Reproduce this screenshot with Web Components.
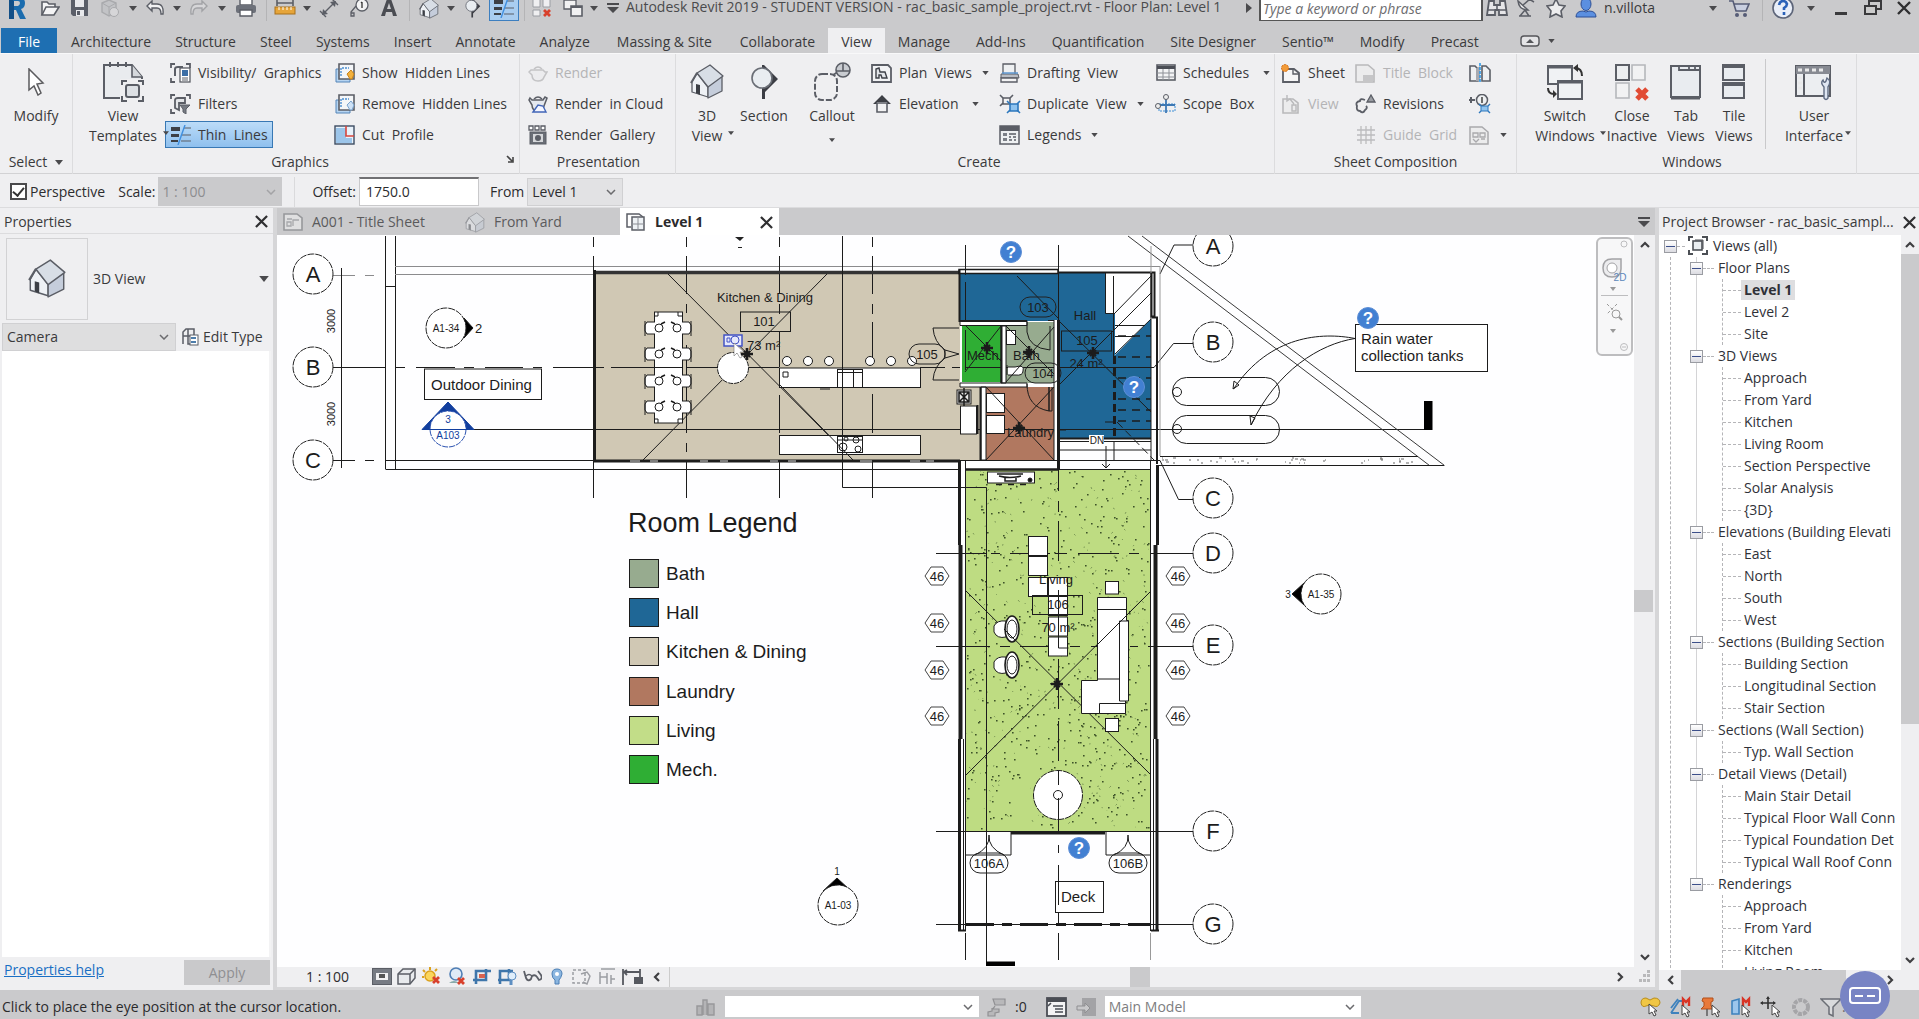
<!DOCTYPE html>
<html lang="en">
<head>
<meta charset="utf-8">
<title>Autodesk Revit 2019 - Floor Plan: Level 1</title>
<style>
html,body{margin:0;height:100%;overflow:hidden}
body{font:14px/20px "Open Sans","Noto Sans",sans-serif;color:#3a3a3c;background:#efeff1}
</style>
</head>
<body>
<rv-app></rv-app>
<script>
const RESET = `*{box-sizing:border-box}button,input,select{font:inherit;color:inherit;margin:0;padding:0;border:0;border-radius:0;background:none;outline:0}button{white-space:pre}`;
function define(name, css, html, setup){
  const t = document.createElement('template');
  customElements.define(name, class extends HTMLElement{
    constructor(){ super(); this.attachShadow({mode:'open'}); }
    connectedCallback(){
      if(this.ready) return; this.ready = true;
      t.innerHTML = `<style>${RESET}${css}</style>` + (typeof html === 'function' ? html(this) : html);
      this.shadowRoot.append(t.content.cloneNode(true));
      if(setup) setup(this);
    }
  });
}

/* ---------- icons: [viewBox width, viewBox height, markup] ---------- */
const G='#5b5e66', L='#9a9da3';
const house=(o)=>`<g opacity="${o}" stroke="${G}" stroke-width="1.3" stroke-linejoin="round"><path d="M2 18 7 9l11 14v10L2 28z" fill="#eef1f5"/><path d="M18 22 32 12v15l-14 7z" fill="#c5cddb"/><path d="M7 9 20 1l13 11-15 11z" fill="#d8dee6"/><path d="M1 19 7 9" stroke-width="2"/><path d="M6 20l4 1v10l-4-2z" fill="#3c3f46" stroke="none"/></g>`;
const thin=`<path d="M1 2h9v4H1zM1 9h8v3H1zM1 15h7v2H1z" fill="#3d4046"/><path d="M14 3h7M12 10h9M11 16h10" stroke="${G}" stroke-width="1.2"/><path d="M15 0 8 20" stroke="#3f8fe0" stroke-width="1.4"/>`;
const redx=(x,y)=>`<path d="M${x} ${y}l6 6m0-6l-6 6" stroke="#d8402c" stroke-width="2.8"/>`;
const cur=(x,y)=>`<path d="M${x} ${y}v10l3-2 2 4 2-1-2-4h3z" fill="#fff" stroke="#444" stroke-width="1"/>`;
const brackets=`<path d="M1 5V1h4M16 1h4v4M1 15v4h4" fill="none" stroke="${G}" stroke-width="1.8"/>`;
const ICONS={
 R:[20,26,`<path d="M2 2h10q6 1 6 6 0 5-4 6l5 10h-6L9 15H7v9H2zM7 6v5h4q2-1 2-3 0-2-2-2z" fill="#1b6cae"/><path d="M2 2l5 4v18H2z" fill="#124f87"/>`],
 open:[20,20,`<path d="M2 17V4h5l2 2h6v3" fill="#f4f4f5" stroke="${G}" stroke-width="1.6"/><path d="M2 17 6 9h13l-5 8z" fill="#f4f4f5" stroke="${G}" stroke-width="1.6"/>`],
 save:[20,20,`<path d="M1 2h17v16H3l-2-2z" fill="#5a5e68"/><path d="M5 2h9v7H5z" fill="#e8e9ec"/><path d="M6 12h8v6H6z" fill="#e8e9ec"/><path d="M7 13h3v4H7z" fill="#5a5e68"/>`],
 sync:[20,20,`<path d="M2 5 9 2l7 3v9l-7 4-7-4z" fill="#c2c3c6" stroke="#a9aaad" stroke-width="1.4"/><path d="M2 5l7 4 7-4M9 9v9" stroke="#a9aaad" fill="none"/><circle cx="14" cy="14" r="4.500" fill="#d6d6d8" stroke="#a9aaad"/>`],
 undo:[20,20,`<path d="M7 3 2 8l5 5v-3h5q4 0 4 6h2q1-10-6-10H7z" fill="#f2f2f3" stroke="${G}" stroke-width="1.4"/>`],
 redo:[20,20,`<path d="M13 3l5 5-5 5v-3H8q-4 0-4 6H2Q1 6 8 6h5z" fill="#d6d6d8" stroke="#a2a3a6" stroke-width="1.4"/>`],
 print:[22,20,`<path d="M5 1h12v6H5z" fill="#fff" stroke="${G}" stroke-width="1.4"/><rect x="1" y="7" width="20" height="8" rx="2" fill="#6d717a"/><path d="M5 12h12v6H5z" fill="#fff" stroke="${G}" stroke-width="1.4"/>`],
 measure:[22,20,`<rect x="1" y="9" width="20" height="7" fill="#e6a53a" stroke="#a8701c"/><path d="M3 5h16M3 2v6M19 2v6" stroke="${G}" stroke-width="1.6"/><path d="M5 9v3M9 9v3M13 9v3M17 9v3" stroke="#fff"/>`],
 dim:[20,20,`<path d="M4 16 16 4M1 13l6 6M13 1l6 6" stroke="${G}" stroke-width="1.4"/><path d="M3 17l1-6 5 5zM17 3l-1 6-5-5z" fill="${G}"/>`],
 tag:[20,20,`<circle cx="13" cy="7" r="6" fill="#f3f3f4" stroke="${G}" stroke-width="1.3"/><path d="M13 4v6M12 5l1-1" stroke="#333" stroke-width="1.3"/><path d="M7 8 2 14v4h3v-3H2" fill="none" stroke="${G}" stroke-width="1.3"/>`],
 A:[18,20,`<path d="M1 18 7 1h4l6 17h-4l-1-4H6l-1 4zM7 11h4L9 5z" fill="#4a4c52" fill-rule="evenodd"/>`],
 house:[34,35,house(1)],
 houseDim:[34,35,house(.45)],
 sect:[30,36,`<path d="M15 1 29 15 16 28v7h-3V1z" fill="#3b3d44"/><circle cx="13" cy="14" r="10" fill="#e9edf1" stroke="#6a6e76" stroke-width="1.6"/>`],
 thin:[22,20,thin],
 closehid:[20,20,`<path d="M1 1h7v8H1zM11 1h7v8h-7zM1 12h7v6H1z" fill="#efeff1" stroke="${L}"/>${redx(12,12)}`],
 switchw:[20,20,`<path d="M1 2h12v9H1z" fill="#f1f1f2" stroke="${G}" stroke-width="1.3"/><path d="M8 8h11v10H8z" fill="#f1f1f2" stroke="${G}" stroke-width="1.6"/><path d="M8 9h11" stroke="${G}" stroke-width="2"/>`],
 tri:[8,5,`<path d="M0 0h8L4 5z" fill="#4a4a4d"/>`],
 triR:[6,10,`<path d="M0 0l6 5-6 5z" fill="#4a4a4d"/>`],
 tribar:[12,10,`<path d="M0 0h12v2H0zM0 4h12L6 10z" fill="#4a4a4d"/>`],
 binoc:[22,20,`<path d="M3 3h5v4h6V3h5l2 14h-8v-5H9v5H1z" fill="#e6e6e8" stroke="${G}" stroke-width="1.8"/><path d="M2 12h6M14 12h6M11 7v5" stroke="${G}" stroke-width="1.6"/>`],
 sat:[20,20,`<path d="M2 3q1 9 10 9z" fill="#eee" stroke="${G}" stroke-width="1.5"/><path d="M7 7l7-6M3 18h12M9 12l4 6M9 12l-5 6M13 1l5 3" stroke="${G}" stroke-width="1.5"/>`],
 star:[20,20,`<path d="M10 1l3 6 6 1-4 5 1 6-6-3-6 3 1-6-4-5 6-1z" fill="#ededee" stroke="${G}" stroke-width="1.6"/>`],
 user:[22,22,`<ellipse cx="11" cy="7" rx="5" ry="6.500" fill="#5b8fe0" stroke="#2d4f96"/><path d="M1 20q0-6 7-6l3 1 3-1q7 0 7 6z" fill="#5b8fe0" stroke="#2d4f96"/>`],
 cart:[22,20,`<path d="M1 3h4l3 10h10l3-7H6" fill="#c9cfe0" stroke="#565c76" stroke-width="1.6"/><circle cx="9" cy="17" r="2" fill="#565c76"/><circle cx="17" cy="17" r="2" fill="#565c76"/>`],
 helpb:[24,24,`<circle cx="12" cy="12" r="10" fill="#e9eef8" stroke="#5c6478" stroke-width="1.6"/><path d="M8 9q1-4 4-4t4 3q0 2-3 4v2M13 16v3" fill="none" stroke="#2a61b8" stroke-width="2.6"/>`],
 min:[12,16,`<path d="M0 12h12v3H0z" fill="#3a3a3c"/>`],
 restore:[18,16,`<path d="M5 1h12v8H5z" fill="none" stroke="#3a3a3c" stroke-width="2"/><path d="M1 6h11v8H1z" fill="#ccc" stroke="#3a3a3c" stroke-width="2"/>`],
 x:[14,14,`<path d="M1 1l12 12M13 1L1 13" stroke="#2f2f31" stroke-width="2.4"/>`],
 pill:[20,12,`<rect x="1" y="1" width="18" height="10" rx="3" fill="#e4e4e6" stroke="#55565a" stroke-width="1.4"/><path d="M6 8l4-4 4 4z" fill="#55565a"/>`],
 arrow:[20,28,`<path d="M3 1v21l5-4 4 9 3-2-4-9 6-1z" fill="#fff" stroke="#5b5b5e" stroke-width="1.5"/>`],
 vtempl:[42,40,`<path d="M2 3h28l10 12v21H2z" fill="#e9ebee" stroke="${G}" stroke-width="2"/><path d="M30 3v12h10" fill="#d5d8dc" stroke="${G}" stroke-width="1.6"/><path d="M8 0v5M16 0v5M24 0v5" stroke="${G}" stroke-width="2"/><rect x="18" y="17" width="24" height="23" fill="#efeff1"/><path d="M20 23v-4h5M36 19h5v4M20 34v5h5M36 39h5v-5" stroke="${G}" fill="none" stroke-width="2"/><rect x="24" y="23" width="13" height="12" rx="2" fill="#dde0e4" stroke="${G}" stroke-width="2"/>`],
 vis:[21,20,`${brackets}<path d="M5 13V6q0-2 3-2h5" fill="none" stroke="${G}" stroke-width="2"/><rect x="10" y="5" width="10" height="14" fill="#fff" stroke="${G}" stroke-width="1.3"/><path d="M12 7h6v6h-6z" fill="#3c6ea5"/><path d="M12 15h6M12 17h6" stroke="${G}"/>`],
 filt:[21,20,`${brackets}<path d="M5 14V6q0-2 3-2h7v5H9v7z" fill="#e4e6e9" stroke="${G}" stroke-width="1.8"/><path d="M10 11h10l-4 4v5l-3-2v-3z" fill="#777b83" stroke="${G}"/>`],
 show:[21,20,`<path d="M2 6h14v13H2z" fill="#b6d4f1" stroke="#5585b8"/><path d="M5 1h15v15H5z" fill="#f4f6f8" stroke="${G}" stroke-width="1.6"/><path d="M7 13V5h8" fill="none" stroke="#4b8ed0" stroke-dasharray="2 1" stroke-width="1.4"/><path d="M17 7l3 4-2 5h-2l-3-5z" fill="#f3b13d" stroke="#c98318"/>`],
 remo:[21,20,`<path d="M2 6h14v13H2z" fill="#b6d4f1" stroke="#5585b8"/><path d="M5 1h15v15H5z" fill="#f4f6f8" stroke="${G}" stroke-width="1.6"/><path d="M7 13V5h8" fill="none" stroke="#4b8ed0" stroke-dasharray="2 1" stroke-width="1.4"/><path d="M17 7l3 4-2 5h-2l-3-5z" fill="#cfe2f6" stroke="#7aa4cf"/>`],
 cutp:[21,20,`<rect x="1" y="1" width="19" height="18" fill="#e8f1fa" stroke="#3c4c62" stroke-width="1.4"/><path d="M2 3l10 0v10h6v5H2z" fill="#9cc5ea"/><path d="M12 1v10h8" fill="none" stroke="#d8453c" stroke-width="1.6"/>`],
 tea:[20,18,`<path d="M4 6h11l2 2h2l-3 5q-1 4-6 4-6 0-6-6L1 8l2-2z" fill="#ececee" stroke="#c3c3c5" stroke-width="1.5"/><path d="M6 5q4-4 8 0" fill="none" stroke="#c3c3c5" stroke-width="1.5"/>`],
 teac:[20,18,`<path d="M4 5h11l2-3 2 1-3 8q-1 5-6 5-6 0-6-6L1 5l1-2z" fill="#e4e8ee" stroke="${G}" stroke-width="1.5"/><path d="M6 4q4-4 8 0" fill="none" stroke="${G}" stroke-width="1.5"/><path d="M5 17l5-7 5 1 3 6z" fill="#f4f6ff" stroke="#4266b8" stroke-width="1.4"/>`],
 gall:[20,20,`<path d="M1 1h4v4H1zM7 1h4v4H7zM13 1h4v4h-4z" fill="#fff" stroke="${G}" stroke-width="1.3"/><rect x="2" y="7" width="16" height="12" fill="#6a6e76" stroke="${G}"/><rect x="5" y="9" width="10" height="8" fill="#d5d7da"/><circle cx="10" cy="13" r="3" fill="${G}"/>`],
 callout:[38,40,`<rect x="2" y="12" width="22" height="26" rx="7" fill="none" stroke="${G}" stroke-width="2" stroke-dasharray="6 2"/><path d="M20 13 28 8" stroke="${G}" stroke-width="2"/><circle cx="30" cy="8" r="7" fill="#c9ccd1" stroke="${G}" stroke-width="1.6"/><path d="M23 9h14M30 1v8" stroke="${G}" stroke-width="1.6"/>`],
 plan:[21,20,`<path d="M1 2h16l3 3v14H1z" fill="#f2f3f5" stroke="${G}" stroke-width="1.8"/><path d="M5 15V6l3-1 1 4h5l2 6h-5l-1-3H8v3z" fill="#e3e6ea" stroke="#3e4148" stroke-width="1.4"/>`],
 elev:[20,20,`<path d="M10 1 19 10h-4V8H5v2H1z" fill="#3d3f45"/><path d="M5 9h10v9H5z" fill="#f2f2f3" stroke="${G}" stroke-width="1.6"/>`],
 draft:[21,20,`<path d="M4 1h12v12H4z" fill="#eef0f2" stroke="${G}" stroke-width="1.3"/><path d="M2 11h17l1 4H2z" fill="#b9bdc4" stroke="${G}"/><path d="M2 15h16v4H2z" fill="#f3f3f4" stroke="${G}" stroke-width="1.4"/><path d="M3 10h16" stroke="#5e97d0" stroke-width="1.5"/>`],
 dup:[22,20,`<path d="M4 4h7v6H4z" fill="#f2f2f3" stroke="${G}" stroke-width="1.5"/><path d="M1 1l3 3M14 1l-3 3M1 12l3-3" stroke="${G}" stroke-width="1.6"/><path d="M11 10h8v7h-8z" fill="#8fc3ef" stroke="#2e78bd" stroke-width="1.6"/><path d="M8 7l3 3M21 7l-3 3M8 19l3-3M21 19l-3-3" stroke="#2e78bd" stroke-width="1.6"/>`],
 leg:[21,20,`<rect x="1" y="1" width="19" height="18" fill="#eef0f2" stroke="${G}" stroke-width="1.5"/><path d="M1 1h19v5H1z" fill="${G}"/><path d="M4 8h4v3H4zM4 13h4v3H4z" fill="#7b7f87"/><path d="M10 9h7M10 12h2M14 12h3M10 15h3M15 15h2" stroke="${G}" stroke-width="1.4"/>`],
 sched:[20,18,`<rect x="1" y="1" width="18" height="15" fill="#f2f3f5" stroke="${G}" stroke-width="1.6"/><path d="M1 2h18v3H1z" fill="#4a4d55"/><path d="M1 9h18M1 13h18M7 5v11M13 5v11" stroke="#8d9097"/>`],
 scope:[22,20,`<path d="M4 10h16v7H4z" fill="none" stroke="#3d8ed6" stroke-dasharray="2 1"/><path d="M11 3v16M2 11h18" stroke="#3d78b4" stroke-width="1.8"/><circle cx="11" cy="3" r="2.500" fill="#eee" stroke="${G}"/><circle cx="3" cy="12" r="2.500" fill="#eee" stroke="${G}"/>`],
 sheet:[21,20,`<path d="M3 6h11l5 4v9H3z" fill="#f5f5f6" stroke="${G}" stroke-width="1.8"/><path d="M13 6v5h6" fill="none" stroke="${G}" stroke-width="1.4"/><circle cx="5" cy="5" r="3.500" fill="#f29b38" stroke="#cf6c18" stroke-dasharray="2 1"/>`],
 sview:[21,20,`<path d="M3 5h10l5 4v10H3z" fill="#ececed" stroke="#b9b9bb" stroke-width="1.6"/><path d="M7 1v6l3-2 4 5M12 11h4v6h-4z" fill="none" stroke="#b9b9bb" stroke-width="1.4"/>`],
 tblock:[21,20,`<path d="M1 2h12l6 5v12H1z" fill="#ececed" stroke="#b9b9bb" stroke-width="1.6"/><path d="M8 12h10v6H8z" fill="#c6c6c8"/>`],
 rev:[21,20,`<path d="M10 6q-5-2-5 1-5 1-3 5-1 5 3 5 3 3 5-1 3-2 1-4" fill="none" stroke="${G}" stroke-width="1.8"/><path d="M16 1l4 7h-8z" fill="#9a9da3" stroke="${G}" stroke-width="1.3"/>`],
 grid:[20,20,`<path d="M5 1v18M10 1v18M15 1v18M1 5h18M1 10h18M1 15h18" stroke="#bcbcbe" stroke-width="1.3"/>`],
 match:[22,20,`<path d="M1 18V3h5l3 3v12zM13 18V3h4l4 4v11z" fill="#eef0f2" stroke="${G}" stroke-width="1.6"/><path d="M7 18V6l4-3v15z" fill="#a8aab0"/><path d="M11 0v20" stroke="#2f9ae8" stroke-width="1.6" stroke-dasharray="3 1"/>`],
 vref:[22,20,`<path d="M0 6h6M2 3v6" stroke="${G}" stroke-width="2"/><circle cx="13" cy="6" r="5.500" fill="#eef0f2" stroke="${G}" stroke-width="1.5"/><path d="M13 3v6" stroke="#333" stroke-width="1.4"/><path d="M12 12h7v5h-7z" fill="#8fc3ef" stroke="#2e78bd"/><path d="M10 10l2 2M21 10l-2 2M10 19l2-2M21 19l-2-2" stroke="#2e78bd" stroke-width="1.4"/>`],
 vport:[21,20,`<path d="M1 2h12l6 5v12H1z" fill="#ececed" stroke="#a9a9ac" stroke-width="1.5"/><path d="M4 8h5v4H4zM11 8h5v4h-5zM4 14l3 3 3-3M12 14h4" fill="none" stroke="#a9a9ac" stroke-width="1.3"/>`],
 bswitch:[40,38,`<path d="M3 3h24v18H3z" fill="#f0f2f4" stroke="${G}" stroke-width="2"/><path d="M3 4h24" stroke="${G}" stroke-width="3"/><path d="M13 18h24v18H13z" fill="#f0f2f4" stroke="${G}" stroke-width="2"/><path d="M13 19h24" stroke="${G}" stroke-width="3"/><path d="M37 13q0-8-7-8M3 25q0 6 6 6" fill="none" stroke="#333" stroke-width="2"/><path d="M33 1v8l-5-4zM8 27v8l4-4z" fill="#333"/>`],
 bclose:[34,38,`<path d="M1 2h13v15H1z" fill="#eceef0" stroke="${G}" stroke-width="2"/><path d="M17 2h13v15H17zM1 20h13v15H1z" fill="#f2f2f3" stroke="#b5b7bb" stroke-width="1.6"/><path d="M22 26l10 10m0-10L22 36" stroke="#e14b34" stroke-width="5"/>`],
 btab:[34,38,`<path d="M2 3h29v31H2z" fill="#e9ecf0" stroke="${G}" stroke-width="2"/><path d="M2 35h29" stroke="${G}" stroke-width="3"/><path d="M10 3v4h20M20 3v4M26 3v4" stroke="${G}" fill="none" stroke-width="1.8"/>`],
 btile:[26,38,`<path d="M2 3h21v14H2zM2 21h21v14H2z" fill="#e9ecf0" stroke="${G}" stroke-width="2"/><path d="M1 3h23M1 21h23" stroke="${G}" stroke-width="4"/>`],
 bui:[40,38,`<path d="M2 3h34v30H2z" fill="#eceef1" stroke="${G}" stroke-width="2"/><path d="M2 3h34v8H2z" fill="#878a92"/><path d="M4 7h4M11 7h4M18 7h4M25 7h4M4 15h4M4 20h4M4 25h4" stroke="#e9e9ea" stroke-width="3"/><path d="M10 11v22" stroke="${G}" stroke-width="2"/><path d="M29 17q1 4 3 1l1-3q5 3 1 9v11q-2 3-4 0V24q-4-4-1-7z" fill="#dfe6f2" stroke="#5f6b82" stroke-width="1.4"/>`],
 launch:[8,8,`<path d="M1 1l5 5M7 2v5H2" fill="none" stroke="#444" stroke-width="1.6"/>`],
 sheetDim:[20,18,`<path d="M1 1h13l5 4v12H1z" fill="#dfdfe0" stroke="#97989b" stroke-width="1.6"/><path d="M4 13V9h4v4zM10 13V7h6M4 6h5" fill="none" stroke="#a7a8ab" stroke-width="1.3"/>`],
 planTab:[20,18,`<path d="M5 1H1v13h4M5 1h8l4 3" fill="none" stroke="${G}" stroke-width="1.5"/><path d="M6 4h12v13H6z" fill="#eef2f5" stroke="${G}" stroke-width="1.5"/><path d="M6 11h12M12 4v13" stroke="#8a8d94"/>`],
 etype:[17,18,`<path d="M1 16V4l3-3h8v14M1 8h14M6 1v15h3" fill="none" stroke="${G}" stroke-width="1.5"/><rect x="8" y="7" width="8" height="10" fill="#fff" stroke="${G}"/><path d="M9 9h5v2H9zM9 13h5v2H9z" fill="#4d7dab"/>`],
 chevD:[10,6,`<path d="M1 1l4 4 4-4" fill="none" stroke="#6b6b6e" stroke-width="1.5"/>`],
 chU:[10,7,`<path d="M1 6l4-4 4 4" fill="none" stroke="#3f3f42" stroke-width="2.2"/>`],
 chD:[10,7,`<path d="M1 1l4 4 4-4" fill="none" stroke="#3f3f42" stroke-width="2.2"/>`],
 chL:[7,10,`<path d="M6 1L2 5l4 4" fill="none" stroke="#3f3f42" stroke-width="2.2"/>`],
 chR:[7,10,`<path d="M1 1l4 4-4 4" fill="none" stroke="#3f3f42" stroke-width="2.2"/>`],
 grip:[12,12,`<path d="M8 0h3v3H8zM4 4h3v3H4zM8 4h3v3H8zM0 9h3v3H0zM4 9h3v3H4zM8 9h3v3H8z" fill="#b9b9bb"/>`],
 views:[20,20,`<path d="M1 5V1h4M14 1h5v4M1 14v4h4M14 18h5v-4" fill="none" stroke="#4c4f55" stroke-width="2"/><rect x="5" y="5" width="9" height="9" fill="#e9edf0" stroke="#4c4f55" stroke-width="1.6"/><path d="M7 4h8v9" fill="none" stroke="#4c4f55"/>`],
 v1:[20,18,`<rect x="1" y="1" width="18" height="15" fill="#f1f1f2" stroke="${G}" stroke-width="2"/><path d="M1 1h18v4H1zM1 12h18v4H1zM1 5h3v7H1zM16 5h3v7h-3z" fill="#777b83"/><rect x="7" y="6" width="6" height="4" fill="#555"/>`],
 v2:[20,18,`<path d="M1 6l5-5h12v9l-5 6H1z" fill="#e8eaed" stroke="${G}" stroke-width="1.5"/><path d="M1 6h12v10M13 6l5-5" fill="none" stroke="${G}" stroke-width="1.5"/>`],
 v3:[20,20,`<circle cx="8" cy="9" r="5" fill="#fbd65c" stroke="#dba11e" stroke-width="1.5"/><path d="M8 0v3M1 3l2 2M0 10h2M15 2l-2 2" stroke="#dba11e" stroke-width="2"/>${redx(11,10)}`],
 v4:[20,20,`<circle cx="9" cy="7" r="6" fill="#dfeaf7" stroke="#4f7eb5" stroke-width="1.6"/><path d="M2 16q5-4 10 0z" fill="#8aa" />${redx(11,11)}`],
 v5:[20,18,`<path d="M4 16V3h15M1 12h13V1" fill="none" stroke="#3f76ab" stroke-width="2.6"/><rect x="7" y="6" width="6" height="4" fill="#d8624f"/>`],
 v6:[20,18,`<path d="M3 16V3h13M1 12h11V1" fill="none" stroke="#3f76ab" stroke-width="2.6"/><circle cx="15" cy="8" r="4" fill="#dfeefb" stroke="#5e8fc2"/><path d="M14 12v5" stroke="#5e8fc2" stroke-width="3"/>`],
 v7:[20,18,`<path d="M2 3l2 7q2 4 5 1l1-3q3-2 5 1l2 3q4-1 2-5L16 3" fill="none" stroke="${G}" stroke-width="1.8"/><path d="M10 8q-3-3-6 0" fill="none" stroke="${G}" stroke-width="1.4"/>`],
 v8:[12,18,`<path d="M6 1q5 0 5 5-1 4-3 6v4H4v-4Q1 10 1 6q0-5 5-5z" fill="#8bb6e0" stroke="#4c7fb5"/><circle cx="6" cy="6" r="2" fill="#fff"/>`],
 v9:[20,18,`<path d="M1 2h12v13H1z" fill="none" stroke="#9c9ea3" stroke-width="1.5" stroke-dasharray="3 2"/><path d="M9 6l6-2 3 4-3 8-4-2" fill="none" stroke="#9c9ea3" stroke-width="1.4"/>`],
 v10:[18,18,`<path d="M3 1h14M2 4v12M2 9h7v7M9 5v4M13 7v9M13 11h4" fill="none" stroke="#9c9ea3" stroke-width="1.5"/>`],
 v11:[22,18,`<path d="M2 1v16M2 4h17v5M19 1v4M6 2L3 4l3 3" fill="none" stroke="#55585f" stroke-width="1.8"/><rect x="13" y="9" width="9" height="7" fill="#55585f"/>`],
 s1:[22,20,`<path d="M2 18V9h5v9zM8 18V3h4v15M13 18V7h6v11z" fill="#b4b4b6" stroke="#98989a" stroke-width="1.4"/>`],
 s2:[22,20,`<path d="M6 2h12v6H8zM8 9l-2 3h6v3l-4 1v3H1v-4l4-1v-3" fill="#b8b8ba" stroke="#909093" stroke-width="1.2"/>`],
 s3:[22,20,`<rect x="2" y="1" width="19" height="18" fill="#f3f3f4" stroke="#4a4d54" stroke-width="1.8"/><path d="M2 1h19v4H2z" fill="#4a4d54"/><path d="M8 9h10M10 12h8M10 15h8M3 9l3-3" stroke="#4a4d54" stroke-width="1.6"/>`],
 s4:[22,20,`<path d="M7 1h14v18H7z" fill="#a3a3a6"/><path d="M2 9h8V6l5 5-5 5v-3H2z" fill="#c8c8ca" stroke="#8f8f92"/>`],
 t1:[22,22,`<path d="M1 7q0-5 5-5l4 2 4-2q6 0 6 5-2 5-6 3l-4-1-4 1Q2 12 1 7z" fill="#f0c644" stroke="#b98d1b"/>${cur(9,8)}`],
 t2:[22,22,`<path d="M1 17 9 5h4M1 12 8 3M1 17h8" fill="none" stroke="#3e82bd" stroke-width="1.8"/><path d="M13 10V3l3 3 3-3v7" fill="none" stroke="#d83425" stroke-width="2.4"/>${cur(12,9)}`],
 t3:[22,22,`<path d="M3 2h10v3l-2 1v4l3 3H1l3-3V6L2 5z" fill="#e8793a" stroke="#b34f18"/><path d="M7 13v7" stroke="#555" stroke-width="1.4"/>${cur(12,9)}`],
 t4:[22,22,`<path d="M2 5l7-2v15H2z" fill="#9cc6ec" stroke="#3e82bd" stroke-width="1.6"/><path d="M13 10V3l3 3 3-3v7" fill="none" stroke="#d83425" stroke-width="2.4"/>${cur(12,9)}`],
 t5:[22,22,`<path d="M8 1v12M1 7h14" stroke="#333" stroke-width="1.6"/><path d="M8 0l2 3H6zM0 7l3-2v4zM16 7l-3-2v4z" fill="#333"/>${cur(12,9)}`],
 t6:[22,22,`<circle cx="11" cy="11" r="7" fill="none" stroke="#a5a5a8" stroke-width="4" stroke-dasharray="4 1"/>`],
 t7:[22,22,`<path d="M1 3h20l-8 8v9l-4-2v-7z" fill="#d9dadc" stroke="#6b6e75" stroke-width="1.5"/>`]
};
define('rv-icon', ':host{display:inline-flex;flex:none}svg{display:block}', el=>{
  const [w,h,m]=ICONS[el.getAttribute('name')];
  const W=+(el.getAttribute('w')||w);
  return `<svg width="${W}" height="${Math.round(h*W/w)}" viewBox="0 0 ${w} ${h}" fill="none" aria-hidden="true">${m}</svg>`;
});
const ic=(n,w)=>`<rv-icon name="${n}"${w?` w="${w}"`:''}></rv-icon>`;

/* ---------- title bar ---------- */
const qat=[['R',34],['open',32],['save',28],['sync',32],['tri',14],['undo',30],['tri',14],['redo',30],['tri',16],['print',32],['|',8],['measure',30],['tri',14],['dim',30],['tag',30],['A',30],['|',10],['house',30,20],['tri',14],['sect',28,17],['thin',36],['|',4],['closehid',32],['switchw',30],['tri',12],['tribar',26]];
const cell=([n,w,s])=> n==='|' ? `<i style="width:${w}px"></i>` : `<button class="${n==='thin'?'on':''}" style="width:${w}px" aria-label="${n}">${ic(n,s|| (n==='tri'?8:0))}</button>`;
define('rv-titlebar', `
:host{display:flex;height:28px;background:#cacacc;align-items:flex-start}
.row{display:flex;align-items:center;height:40px;margin-top:-12px;width:100%}
button{display:flex;align-items:center;justify-content:center;height:40px;flex:none}
button.on{height:26px;width:30px!important;margin:0 3px;background:#a9cdf0;border:1px solid #3d7fc0}
i{height:26px;display:flex;justify-content:center;flex:none}i::before{content:"";width:1px;background:#b4b4b6}
.t{flex:1;white-space:nowrap;line-height:14px;padding-bottom:2px;color:#4a4a4c}
input{width:224px;height:21px;margin-top:5px;background:#fff;border:1px solid #555;border-width:0 2px 1px;font-style:italic;padding:0 2px 3px}
input::placeholder{color:#6d6d70;opacity:1}
.u{width:102px;padding-left:3px;line-height:16px}`,
`<div class="row">${qat.map(cell).join('')}<div class="t">Autodesk Revit 2019 - STUDENT VERSION - rac_basic_sample_project.rvt - Floor Plan: Level 1</div>
<button style="width:20px" aria-label="More">${ic('triR')}</button><input aria-label="Search" placeholder="Type a keyword or phrase">
${[['binoc',28],['sat',30],['star',30],['user',30]].map(cell).join('')}<span class="u">n.villota</span>${[['tri',20],['cart',32],['|',14],['helpb',28],['tri',28],['min',32],['restore',32],['x',30]].map(cell).join('')}</div>`);

/* ---------- ribbon tabs ---------- */
const tabs=['Architecture','Structure','Steel','Systems','Insert','Annotate','Analyze','Massing & Site','Collaborate','View','Manage','Add-Ins','Quantification','Site Designer','Sentio™','Modify','Precast'];
define('rv-ribbon-tabs', `
:host{display:flex;height:25px;background:#cacacc;padding-left:1px}
nav{display:flex}button{padding:2px 12px 0;height:25px}
.w{padding:2px 13px 0}.w2{padding:2px 15px 0}
.file{background:#1e6fb2;color:#fff;width:56px;margin-right:2px}.on{background:#efeff1}
.p{display:flex;align-items:center;gap:8px;padding:0 0 0 28px}`,
`<nav><button class="file">File</button>${tabs.map((t,i)=>`<button class="${i>7?'w':i===7?'w2':''} ${t==='View'?'on':''}">${t.replace('&','&amp;')}</button>`).join('')}<button class="p" aria-label="Minimize ribbon">${ic('pill')}${ic('tri',7)}</button></nav>`);

/* ---------- ribbon ---------- */
define('rv-group', `
:host{display:flex;flex-direction:column;height:120px;border-right:1px solid #dcdcde;flex:none;position:relative}
.b{flex:1;display:flex;align-items:flex-start;padding-top:5px}
.l{height:24px;display:flex;align-items:center;justify-content:center;gap:8px}
.k{position:absolute;right:5px;bottom:6px}`,
el=>`<div class="b"><slot></slot></div><div class="l">${el.getAttribute('label')}${el.hasAttribute('menu')?ic('tri'):''}</div>${el.hasAttribute('launcher')?`<span class="k">${ic('launch')}</span>`:''}`);
define('rv-col', `:host{display:flex;flex-direction:column;gap:4px;flex:none}`, `<slot></slot>`);
define('rv-tool', `
:host{display:block;height:27px}
button{height:27px;display:flex;align-items:center;gap:7px;padding:0 4px;border:1px solid transparent}
.on{background:linear-gradient(#bcdcf8,#8fc0ee);border-color:#3878b4}
.off{color:#b4b4b6}
.m{margin-left:3px;display:flex}
.i{width:21px;display:flex;justify-content:center}`,
el=>{const t=el.getAttribute('text')||'';return `<button class="${el.hasAttribute('on')?'on':''} ${el.hasAttribute('off')?'off':''}" aria-label="${t||el.getAttribute('icon')}"><span class="i">${ic(el.getAttribute('icon'))}</span>${t}${el.hasAttribute('menu')?`<span class="m">${ic('tri',7)}</span>`:''}</button>`});
define('rv-big', `
:host{display:block;flex:none}
button{display:flex;flex-direction:column;align-items:center;width:100%;text-align:center;position:relative}
.i{height:47px;display:flex;align-items:center;padding-bottom:2px}
.m{position:absolute;right:-4px;top:61px}.m.c{right:auto;top:68px}`,
el=>`<button><span class="i">${ic(el.getAttribute('icon'))}</span>${el.getAttribute('text').split('|').map(s=>`<span>${s}</span>`).join('')}${el.hasAttribute('menu')?`<span class="m ${el.getAttribute('menu')}">${ic('tri',6)}</span>`:''}</button>`);
const T=(icon,text,x='')=>`<rv-tool icon="${icon}" text="${text}" ${x}></rv-tool>`;
const B=(w,icon,text,x='')=>`<rv-big style="width:${w}px" icon="${icon}" text="${text}" ${x}></rv-big>`;
const C=(w,...a)=>`<rv-col style="width:${w}px">${a.join('')}</rv-col>`;
define('rv-ribbon', `
:host{display:flex;height:121px;background:#efeff1;border-top:1px solid #f8f8f9;border-bottom:1px solid #d2d2d4}
.in{width:0;border-left:1px solid #c9c9cb;height:90px;margin:0 15px 0 7px}
.g2{padding-left:8px}.g3{padding-left:2px}.g4{padding-left:8px}.g6{padding-left:11px}`,
`<rv-group label="Select" menu style="width:73px">${B(72,'arrow','Modify')}</rv-group>
<rv-group class="g2" label="Graphics" launcher style="width:447px">${B(84,'vtempl','View|Templates','menu')}${C(164,T('vis','Visibility/  Graphics'),T('filt','Filters'),T('thin','Thin  Lines','on'))}${C(180,T('show','Show  Hidden Lines'),T('remo','Remove  Hidden Lines'),T('cutp','Cut  Profile'))}</rv-group>
<rv-group class="g3" label="Presentation" style="width:156px">${C(150,T('tea','Render','off'),T('teac','Render  in Cloud'),T('gall','Render  Gallery'))}</rv-group>
<rv-group class="g4" label="Create" style="width:599px">${B(46,'house','3D|View','menu')}${B(68,'sect','Section')}${B(68,'callout','Callout','menu="c"')}${C(128,T('plan','Plan  Views','menu'),T('elev','Elevation ','menu'))}${C(156,T('draft','Drafting  View'),T('dup','Duplicate  View','menu'),T('leg','Legends','menu'))}${C(120,T('sched','Schedules ','menu'),T('scope','Scope  Box'))}</rv-group>
<rv-group label="Sheet Composition" style="width:242px">${C(75,T('sheet','Sheet'),T('sview','View','off'))}${C(114,T('tblock','Title  Block','off'),T('rev','Revisions'),T('grid','Guide  Grid','off'))}${C(50,T('match',''),T('vref',''),T('vport','','menu'))}</rv-group>
<rv-group class="g6" label="Windows" style="width:340px">${B(74,'bswitch','Switch|Windows','menu')}${B(60,'bclose','Close|Inactive')}${B(48,'btab','Tab|Views')}${B(48,'btile','Tile|Views')}<span class="in"></span>${B(66,'bui','User|Interface','menu')}</rv-group>`);

/* ---------- combo box ---------- */
define('rv-combo', `
:host{display:flex;position:relative}
select{appearance:none;width:100%;height:100%;padding:0 4px;opacity:1}
select:disabled{color:#8d8d90}
.c{position:absolute;right:6px;top:50%;margin-top:-3px;pointer-events:none;display:flex}:host([off]) .c{opacity:.4}`,
el=>`<select aria-label="${el.getAttribute('label')}" ${el.hasAttribute('off')?'disabled':''}><option>${el.getAttribute('value')||''}</option></select><span class="c">${ic('chevD')}</span>`);

/* ---------- options bar ---------- */
define('rv-options', `
:host{display:flex;align-items:center;height:34px;background:#efeff1;border-bottom:1px solid #dcdcde;color:#2c2c2e;padding:2px 0 0 10px}
input[type=checkbox]{appearance:none;width:17px;height:17px;border:2px solid #4a4a4c;background:#fff;position:relative}
input[type=checkbox]:checked::after{content:"";position:absolute;left:3px;top:0;width:5px;height:9px;border:solid #333;border-width:0 2px 2px 0;transform:rotate(40deg)}
label{margin-left:3px}.s{width:124px;height:29px;background:#cacacc;margin:0 12px 0 3px}
i{height:30px;width:1px;background:#dadadc;margin-right:14px}
.o{width:120px;height:29px;background:#fff;border:1px solid #c9c9cb;border-top:2px solid #707073;padding:0 6px 2px;margin-left:3px;margin-right:8px}
.f{width:96px;height:28px;background:#e2e2e4;border:1px solid #d0d0d2;margin-left:3px}`,
`<input type="checkbox" id="p" checked><label for="p">Perspective</label><label style="margin-left:13px">Scale:</label><rv-combo class="s" label="Scale" value="1 : 100" off></rv-combo><i></i><label for="o">Offset:</label><input class="o" id="o" value="1750.0"><label>From</label><rv-combo class="f" label="From" value="Level 1"></rv-combo>`);

/* ---------- properties ---------- */
define('rv-properties', `
:host{display:flex;flex-direction:column;width:273px;flex:none;background:#efeff1}
header{height:26px;display:flex;align-items:center;justify-content:space-between;padding:2px 5px 0 4px;border-bottom:1px solid #dcdcde}
.ty{display:flex;align-items:center;height:89px;padding:0 4px 0 6px;gap:5px}
.pv{width:82px;height:82px;border:1px solid #d2d2d4;display:flex;align-items:center;justify-content:center;flex:none}
.ty span{flex:1}
.ed{display:flex;height:28px;gap:6px;padding-left:2px}
.ed rv-combo{width:174px;background:#dededf;border:1px solid #d0d0d2}
.ed button{display:flex;align-items:center;gap:4px}
.w{flex:1;background:#fff;margin:0 2px;border-right:2px solid #f3f3f4}
footer{height:33px;display:flex;justify-content:space-between;padding:3px 3px 5px 4px}
a{color:#1a6fc4}footer button{width:86px;height:25px;background:#c9c9cb;color:#8f8f92}`,
`<header>Properties${ic('x',13)}</header><div class="ty"><div class="pv">${ic('house',38)}</div><span>3D View</span>${ic('tri',10)}</div>
<div class="ed"><rv-combo label="Type" value="Camera"></rv-combo><button>${ic('etype')}Edit Type</button></div><div class="w"></div>
<footer><a href="#">Properties help</a><button disabled>Apply</button></footer>`);

/* ---------- document tabs ---------- */
define('rv-doctabs', `
:host{display:flex;height:27px;background:#cacacc;align-items:stretch}
button{display:flex;align-items:center;gap:9px;padding:1px 0 0 6px;color:#5a5a5c}
.a{width:182px}.b{width:161px}.on{background:#fff;color:#2a2a2c;font-weight:700;width:159px;gap:9px;padding:1px 6px 0}
.on span{flex:1;text-align:left}.e{margin-left:auto;padding-right:5px}`,
`<button class="a">${ic('sheetDim')}A001 - Title Sheet</button><button class="b">${ic('houseDim',20)}From Yard</button><button class="on">${ic('planTab')}<span>Level 1</span>${ic('x',13)}</button><button class="e" aria-label="Tab list">${ic('tribar')}</button>`);

/* ---------- floor plan ---------- */
function bubble(x,y,t){return `<circle cx="${x}" cy="${y}" r="20" class="bub"/><text x="${x}" y="${y+8}" class="g">${t}</text>`}
function help(x,y){return `<circle cx="${x}" cy="${y}" r="10.500" fill="#4280d2" stroke="#5f8fd6"/><text x="${x}" y="${y+6}" class="q">?</text>`}
function star(x,y){return `<path d="M${x-6} ${y}h12M${x} ${y-6}v12" stroke-width="2.600"/><path d="M${x-3} ${y-3}l6 6m0-6l-6 6" stroke-width="2"/>`}
function hex(x,y){return `<path d="M${x-12} ${y}l6-9h12l6 9-6 9h-12z" fill="#fff" stroke="#444"/><text x="${x}" y="${y+5}" class="m">46</text>`}
function pill(x,y,w,t){return `<rect x="${x-w}" y="${y-10}" width="${2*w}" height="20" rx="10" stroke="#222"/><text x="${x}" y="${y+5}" class="m">${t}</text>`}
function stipple(){let s=7,d='',e='';const r=()=>(s=(s*16807)%2147483647)/2147483647;
 for(let i=0;i<900;i++){const x=(967+r()*182)|0,y=(471+r()*359)|0; if(i%3) d+=`M${x} ${y}h1.600v1.400h-1.600z`; else e+=`M${x} ${y}l${(r()*4-2).toFixed(1)} ${(r()*2).toFixed(1)}`;}
 return `<path d="${d}" fill="#3d5228" stroke="none"/><path d="${e}" stroke="#7f9b58" stroke-width="1"/>`}
function gravel(){let s=11,e='';const r=()=>(s=(s*16807)%2147483647)/2147483647;for(let i=0;i<45;i++)e+=`M${(1162+r()*250)|0} ${(458+r()*6)|0}h${(1+r()*2).toFixed(0)}`;return `<path d="${e}" stroke="#666"/>`}
function seats(){return [328,354,381,407].map(y=>`<path d="M655 ${y-6}h-8l-2 3v6l2 3h8M645 ${y-7}v15M682 ${y-6}h7l2 3v6l-2 3h-7M691 ${y-7}v15" fill="#fff"/><circle cx="659" cy="${y}" r="4"/><circle cx="677" cy="${y}" r="4"/><path d="M661 ${y-4}l4-2M675 ${y-4}l-4-2" stroke-width="1.500"/>`).join('')}
const box=(x,y,w,h,f='#fff')=>`<rect x="${x}" y="${y}" width="${w}" height="${h}" fill="${f}"/>`;
const legend=[['Bath','#97ab8f'],['Hall','#1f6796'],['Kitchen &amp; Dining','#d0c8b4'],['Laundry','#b17860'],['Living','#c2dd88'],['Mech.','#2fae34']];
define('rv-floor-plan', `
:host{display:block;flex:1;min-width:0;background:#fefeff;overflow:hidden}
svg{display:block;width:100%;height:100%;font-family:"Liberation Sans",Arial,sans-serif;font-size:13px}
text{fill:#1c1c1c;stroke:none}.m{text-anchor:middle}.g{font-size:22px;text-anchor:middle}.n{font-size:15px}.s{font-size:10px;text-anchor:middle}
.q{fill:#fff;font-size:17px;font-weight:700;text-anchor:middle}.bub{fill:#fff;stroke:#222;stroke-dasharray:7 1}.h{font-size:27px}.le{font-size:19px}`,
`<svg viewBox="277 235 1357 732" preserveAspectRatio="xMidYMid meet" fill="none" stroke="#1c1c1c" stroke-width="1" role="img" aria-label="Floor Plan: Level 1">
<g stroke="none"><rect x="594" y="272" width="366" height="189" fill="#d0c8b4"/><rect x="960" y="386" width="21" height="74" fill="#d0c8b4"/>
<path d="M959 273h147v41h9v41l36-36v120h-93V321H959z" fill="#1f6796"/>
<rect x="962" y="326" width="39" height="56" fill="#2fae34"/><rect x="1006" y="322" width="48" height="61" fill="#97ab8f"/><rect x="986" y="387" width="68" height="73" fill="#b17860"/><rect x="966" y="470" width="185" height="361" fill="#bedc82"/></g>
${stipple()}
<path d="M385.500 236V469.500M395.500 236V469.500M385.500 286.500h10M385.500 460.500H594M386 469.500H960"/>
<path d="M395 266.500H1160M395 274.500H594" stroke="#8b8b8d"/>
<path d="M333 275.500h22M365 275.500h9" stroke="#8b8b8d"/><path d="M333 460.500h22M365 460.500h9M333 367.500h53M395 367.500h10M416 367.500h39M464 367.500h10M485 367.500h38M533 367.500h9M553 367.500h41"/>
<path d="M341.500 268V468"/>
<path d="M594 367.500h10M611 367.500h45M686 367.500h46M747 367.500h32M920 367.500h25M952 367.500h8M965 367.500H1154L1173.500 343.500H1193"/>
<path d="M642.500 460.500 828 273M667 273 853.500 460.500"/>
<path d="M593.500 237v10M593.500 256v16M593.500 461v37M686.500 237v10M686.500 256v38M686.500 304v9M686.500 345v88M686.500 443v9M686.500 461v37M779.500 237v10M779.500 256v38M779.500 304v10M779.500 332v35M779.500 395v38M779.500 443v9M779.500 461v37M872.500 237v10M872.500 256v38M872.500 304v10M872.500 322v38M872.500 394v39M872.500 443v9M872.500 461v37"/>
<path d="M594 272.500H960" stroke-width="3.500" stroke="#333"/><path d="M594 461H960" stroke-width="3"/><path d="M630 461h10M650 461h8M700 461h8M720 461h8M770 461h8M788 461h8M860 461h12M910 461h10M926 461h8" stroke="#ddd"/><path d="M594.500 270v192" stroke-width="3"/>
${box(654.5,312,28,111)}<path d="M654 367.500h28M654 316h4v-4M678 312v4h4M654 419h4v4M678 423v-4h4"/>${seats()}
<circle cx="733" cy="368" r="15.500" fill="#fff" stroke-dasharray="5 1"/>
${[787,808,829,870,891,912].map(x=>`<circle cx="${x}" cy="361" r="4.500" fill="#fff"/>`).join('')}
${box(779.5,368,141,19.5)}${box(779.5,435.500,141,19)}${box(837.5,369.500,25,18)}${box(837.5,436.500,25,16)}
<path d="M853.500 369v18M838 372.500h24M783 372h5v5h-5zM838 440h24M820 389h10"/><circle cx="843" cy="447" r="4"/><circle cx="858" cy="449" r="3"/><circle cx="846" cy="439" r="2"/><circle cx="856" cy="440" r="3"/>
<path d="M779 384 853 460"/>
<path d="M842.500 236V487.500H986.500V965"/>
<path d="M448 429.500H1424"/><path d="M1058 430h8" />
<rect x="740.500" y="312" width="50" height="19.500"/>
<text x="765" y="302" class="m">Kitchen &amp; Dining</text><text x="764" y="326" class="m">101</text><text x="747" y="350">73 m²</text>
<rect x="724" y="335" width="18" height="11" fill="#e6e9fb" stroke="#4353c4" stroke-width="1.500"/><circle cx="735" cy="340" r="4" stroke="#4353c4"/><path d="M727 338h3v4h-3z" stroke="#4353c4"/>
<path d="M734 343v13l3-3 3 5 2-1-2-5h4z" fill="#fff" stroke="#777" stroke-width=".6"/>${star(747,354)}
<path d="M959 328h-26q1 14 12 22l14 4M959 380h-26q1-14 12-22l14-4M945 350v8"/>${pill(927,354,18,'105')}
<!-- service core walls -->
<path d="M959 269.500h99v4h-99z" fill="#fff" stroke-width="1.500"/><path d="M959.500 270v52" stroke-width="2"/><path d="M1058 272.500h93" stroke-width="2"/>
<path d="M960 320.500h67v5h-67zM1048 320.500h10M1001 326h5v57h-5zM960 383h67v4h-67zM981 387h5v73h-5z" fill="#fff"/><path d="M960 321h67M1001.500 326v57" stroke-width="2"/>
<path d="M1054 320h5v150h-5z" fill="#fff" stroke="none"/><path d="M1058.500 320v150" stroke-width="3"/><path d="M1054 320v140"/>
<path d="M965.500 245v30M965.500 282v38M965.500 330v40M1058.500 245v75M1058.500 470v20"/>
${box(1006.5,330.500,9,14)}<path d="M1007 365v10M1008 367h7q10-3 8 4 0 5-8 4h-7" fill="#fff"/>
${box(986.5,393.500,18,19)}${box(986.5,415.500,18,18)}${box(960.5,406,16,28)}${box(957,390,14,14,'#e8e8e8')}<path d="M959 392h10v10h-10zM959 392l10 10m0-10-10 10M964 388v18" stroke-width="1.500"/><path d="M977.500 405v29M980.500 387v73" stroke-width="2"/>
<path d="M1027 322v10q2 16 23 18V326M1027 384q0 23 22 27V387M1049 387v24h3v-24"/>
<path d="M966 326l35 35M965 372l36-46M1006 326l48 48M1006 382l48-55M986 387l68 73M986 460l68-73M1017 276l41 42M1058 386l93-93M1060 322l91 90"/>
${pill(1038,307,18,'103')}${pill(1043,373,18,'104')}
<path d="M1106 275h9v38h-9z" fill="#fff" stroke="none"/><path d="M1105.500 273v40.500h9.500M1113.500 276v84" /><path d="M1115 313 1151 276M1115 354 1151 319M1115 325.500h30M1115 336.500h20" />
<path d="M1114.500 356v83" stroke-width="3" stroke-dasharray="8 4"/><path d="M1118 357h33M1118 378h33M1118 399h33M1118 410h33M1118 421h33M1118 336h33" stroke-width="1.500" stroke-dasharray="8 6"/><path d="M1105 422h10M1117 422l37 38" stroke-dasharray="8 4"/>
<path d="M1059 438.500h92" stroke-width="2"/><path d="M1059 441.500h92M1059 450h92M960 460.500h191M1106 446v22M1102 464l4 4 4-4M1114 442v18"/><rect x="1089" y="435" width="15" height="11" fill="#fff" stroke="none"/><text x="1097" y="444" class="s">DN</text>
<path d="M1151 272v188M1160 274 1174 245H1193M1151 460.500h9L1178.500 499.500H1193"/><path d="M1151.500 272.500h3v44h-3zM1152 317.500h6M1157 317v147" stroke-width="2"/>
<rect x="1061.500" y="331" width="50" height="20"/><text x="1085" y="320" class="m">Hall</text><text x="1087" y="345" class="m">105</text><text x="1086" y="368" class="m">24 m²</text>
<text x="967" y="360">Mech.</text><text x="1013" y="360">Bath</text><text x="1007" y="437">Laundry</text>
${star(987,348)}${star(1029,352)}${star(1093,353)}${star(1019,428)}
<!-- living wing -->
<path d="M966 469.500h92" stroke-width="2.500"/><path d="M1058 469.500h93"/>
<path d="M959.500 461v84" stroke-width="3"/><path d="M960.500 545v194" stroke-width="4"/><path d="M965.500 461v470M963.500 739v192"/><path d="M959.500 739v192" stroke-width="3"/><path d="M958 930.500h8M1151 930.500h8" stroke-width="2"/>
<path d="M1157.500 465v80" stroke-width="3"/><path d="M1155.500 545v194" stroke-width="4"/><path d="M1150.500 461v470M1153.500 739v192"/><path d="M1157 739v192" stroke-width="3"/>
${box(987.5,472,47,11)}<path d="M997 474h26M999 476q11 3 22 0M1005 478v3h11v-3M996 484.500h6M1008 484.500h6M1020 484.500h6" stroke-width="1.500"/><circle cx="1030" cy="480" r="2" fill="#111"/>
<path d="M1058.500 485v6M1058.500 501v11M1058.500 521v40M1058.500 659v50M1058.500 721v40M1058.500 771v20"/>
<path d="M936 553.500h50M991 553.500h9M1010 553.500h40M1055 553.500h12M1078 553.500h41M1129 553.500h10M1150 553.500h43M936 646.500h54M1000 646.500h10M1020 646.500h40M1070 646.500h10M1091 646.500h30M1130 646.500h8M1148 646.500h45"/>
${[[1028.5,536.500],[1028.5,556.500],[1028.5,577.500],[1048.5,577.500],[1048.5,596.500],[1048.5,617],[1048.5,637]].map(([x,y])=>box(x,y,19,19)).join('')}
<path d="M966 591 1151 775M1151 591 966 775M1058.500 590v58h10"/>
${box(1105.5,581.500,13,12.5)}${box(1105.5,718.500,13,13)}
<path d="M1097.500 597.500h29v23h2v80h-3v13h-44v-33h16z" fill="#fff"/><path d="M1098 609.500h29M1097 679h22M1119.500 621v80h9v-80zM1099.500 703.500h26v10h-26z" fill="#fff"/><path d="M1151 591 1095 647"/>
${[629,665].map(y=>`<path d="M1006 ${y-8}q-9-1-12 5v6q3 7 12 5z" fill="#fff"/><ellipse cx="1012" cy="${y}" rx="7" ry="13" fill="#fff" stroke-width="1.600"/><ellipse cx="1012" cy="${y}" rx="5" ry="9"/>`).join('')}<path d="M1004 629 1016 641"/>
<text x="1056" y="584" class="m">Living</text><rect x="1032.500" y="595.500" width="50" height="19"/><text x="1058" y="609" class="m">106</text><text x="1058" y="632" class="m">70 m²</text>${star(1057,684)}
<circle cx="1058" cy="795" r="24.500" fill="#fff" stroke-dasharray="7 1"/><circle cx="1058" cy="795" r="4.500"/><path d="M1058.500 771v14M1058.500 798v34M1058.500 845v8M1058.500 865v58M1058.500 933v27"/>
<path d="M936 831.500H1193M936 924.500H1193"/><path d="M1011 833h94" stroke-width="3"/><path d="M966 924.500h185" stroke-width="3" stroke-dasharray="28 8 10 8"/>
<path d="M966 831.500h45v23.500h-45M1151 831.500h-45v23.500h45M989 835q1 13-14 20M989 835q-1 13 15 20M1128 835q1 13-14 20M1128 835q-1 13 15 20"/>
${pill(989,863,19,'106A')}${pill(1128,863,19,'106B')}
<rect x="1055.500" y="881.500" width="48" height="31" fill="#fff"/><path d="M1058.500 882v23M965.500 933v27"/><path d="M1150.500 933v27" stroke="#999"/><text x="1061" y="902" class="n">Deck</text>
<rect x="986" y="961.500" width="29" height="4.500" fill="#000" stroke="none"/>
<!-- site -->
<path d="M1142 236 1444.500 465.500M1128 236 1429.500 465.500" stroke="#3a3a3a"/><path d="M1160 456.500h258M1157 465.500h287"/>${gravel()}<path d="M1151 246v27" stroke="#999"/><path d="M1160 266v190" stroke="#999"/>
<rect x="1172.500" y="377.500" width="107" height="28" rx="14"/><rect x="1172.500" y="415.500" width="107" height="28" rx="14"/><circle cx="1177" cy="392" r="4.500"/><circle cx="1177" cy="429" r="4.500"/>
<path d="M1355 338.500C1322 332 1270 335 1233.500 389M1355 338.500C1320 344 1277 370 1251 425M1233 389l1-8 5 4zM1251 425l-1-9 5 2z"/>
<rect x="1355.500" y="324.500" width="132" height="47" fill="#fff"/><text x="1361" y="344" class="n">Rain water</text><text x="1361" y="361" class="n">collection tanks</text>
<rect x="1424" y="401" width="8.500" height="29" fill="#000" stroke="none"/>
${[576,623,670,716].map(y=>hex(937,y)+hex(1178,y)).join('')}
${bubble(313,274,'A')}${bubble(313,367,'B')}${bubble(313,460,'C')}${bubble(1213,246,'A')}${bubble(1213,342,'B')}${bubble(1213,498,'C')}${bubble(1213,553,'D')}${bubble(1213,645,'E')}${bubble(1213,831,'F')}${bubble(1213,924,'G')}
<text class="m" style="font-size:11px" transform="translate(335 321) rotate(-90)">3000</text><text class="m" style="font-size:11px" transform="translate(335 414) rotate(-90)">3000</text>
<path d="M464 318l9 10-9 10z" fill="#000"/><circle cx="446" cy="328" r="20" class="bub"/><text x="446" y="332" class="s">A1-34</text><text x="475" y="333">2</text>
<rect x="424.500" y="369" width="117" height="30.500" fill="#fff"/><text x="431" y="390" class="n">Outdoor Dining</text>
<path d="M448 402 474 429.500H422z" fill="#123f9e" stroke="#123f9e"/><circle cx="448" cy="429" r="18" fill="#fff" stroke="#2b52b0" stroke-dasharray="6 1"/><path d="M422 429.500h52" stroke="#123f9e"/><text x="448" y="423" class="s" style="fill:#123f9e">3</text><text x="448" y="439" class="s" style="fill:#123f9e">A103</text>
<path d="M837 878l14 13h-28z" fill="#000"/><circle cx="838" cy="905" r="20" class="bub"/><text x="838" y="909" class="s">A1-03</text><text x="837" y="875" class="s">1</text>
<path d="M1292 594l12-11v22z" fill="#000"/><circle cx="1321" cy="594" r="20" class="bub"/><text x="1321" y="598" class="s">A1-35</text><text x="1288" y="598" class="s">3</text>
<path d="M735 237h9l-4 4zM738 247h4v1h-4z" fill="#222" stroke="none"/>
${help(1011,252)}${help(1134,387)}${help(1368,318)}${help(1079,848)}
<text x="628" y="532" class="h">Room Legend</text>
${legend.map(([t,c],i)=>{const y=559+Math.round(i*39.2);return `<rect x="629.500" y="${y+.5}" width="29" height="28" fill="${c}"/><text x="666" y="${y+21}" class="le">${t}</text>`}).join('')}
<!-- navigation bar -->
<g stroke="#bdbdbf"><rect x="1597" y="238" width="35" height="117" rx="5" fill="#f7f7f8" stroke-width="2"/><circle cx="1624" cy="244" r="3"/><circle cx="1624" cy="347" r="3.500"/><path d="M1622 347h4M1601 295.500h27"/><path d="M1612 259h9v10q0 8-9 8t-9-9 9-9z" fill="#ececee" stroke="#a2a2a5" stroke-width="1.500"/><circle cx="1612" cy="268" r="5" stroke="#a2a2a5" fill="#fff"/><path d="M1607 304l10 10M1617 304l-10 10" stroke-dasharray="3 2" stroke="#999"/><circle cx="1616" cy="314" r="4" fill="#f7f7f8" stroke="#999"/><path d="M1619 317l3 3" stroke="#999" stroke-width="2"/><path d="M1610 287h6l-3 4zM1610 329h6l-3 4z" fill="#999" stroke="none"/></g><text x="1620" y="281" class="s" style="fill:#5c86ba">2D</text>
</svg>`);

/* ---------- scroll bars ---------- */
define('rv-vscroll', `
:host{display:flex;flex-direction:column;align-items:center;width:21px;flex:none;background:#efeff1}
span{height:19px;display:flex;align-items:center}
.t{flex:1;width:100%;display:flex;flex-direction:column}
.th{background:#cacacc;margin-right:var(--mr,0)}`,
el=>`<span>${ic('chU')}</span><div class="t"><div style="flex:${el.getAttribute('before')}"></div><div class="th" style="flex:${el.getAttribute('size')}"></div><div style="flex:${el.getAttribute('after')}"></div></div><span>${ic('chD')}</span>`);
define('rv-hscroll', `
:host{display:flex;flex:1;height:20px;align-items:center;background:#efeff1}
span{width:22px;display:flex;justify-content:center}
.t{flex:1;display:flex;height:100%}.th{background:#cacacc}`,
el=>`${el.hasAttribute('noleft')?'':`<span>${ic('chL')}</span>`}<div class="t"><div style="flex:${el.getAttribute('before')}"></div><div class="th" style="flex:${el.getAttribute('size')}"></div><div style="flex:${el.getAttribute('after')}"></div></div><span>${ic('chR')}</span>`);

/* ---------- view control bar ---------- */
define('rv-viewbar', `
:host{display:flex;height:23px;background:#efeff1;border-bottom:3px solid #d6d6d8;align-items:center}
.s{width:92px;text-align:right;padding-right:20px;color:#2c2c2e}
button{width:25px;display:flex;justify-content:center;flex:none}
.g{padding:0 4px 0 8px}i{width:1px;height:20px;background:#ccc}`,
`<span class="s">1 : 100</span>${['v1','v2','v3','v4','v5','v6','v7','v8','v9','v10','v11','chL'].map(n=>`<button aria-label="View control ${n}">${ic(n)}</button>`).join('')}<i></i><rv-hscroll noleft before="463" size="21" after="462"></rv-hscroll><span class="g">${ic('grip')}</span>`);

/* ---------- project browser ---------- */
const tree=[['Floor Plans','Level 1','Level 2','Site'],['3D Views','Approach','From Yard','Kitchen','Living Room','Section Perspective','Solar Analysis','{3D}'],['Elevations (Building Elevati','East','North','South','West'],['Sections (Building Section','Building Section','Longitudinal Section','Stair Section'],['Sections (Wall Section)','Typ. Wall Section'],['Detail Views (Detail)','Main Stair Detail','Typical Floor Wall Conn','Typical Foundation Det','Typical Wall Roof Conn'],['Renderings','Approach','From Yard','Kitchen','Living Room']];
define('rv-browser', `
:host{display:flex;flex-direction:column;width:260px;flex:none;background:#efeff1}
header{height:27px;display:flex;align-items:center;justify-content:space-between;padding:1px 3px 0;white-space:nowrap}
.m{flex:1;display:flex;min-height:0}
.tree{flex:1;min-width:0;background:#fff;overflow:hidden;white-space:nowrap;color:#2f3138}
ul{list-style:none;margin:0;padding:0}
.row{display:flex;align-items:center;height:22px}
.e{width:13px;height:13px;border:1px solid #9a9ca2;background:linear-gradient(#fff,#dcdce2);position:relative;flex:none}
.e::after{content:"";position:absolute;left:1px;right:1px;top:5px;height:1px;background:#3c4f8a}
.d{border-top:1px dashed #b5b5b8;flex:none}
.root{padding-left:5px}.l1{margin-left:11px;border-left:1px dashed #b5b5b8}
.l1>li>.row{padding-left:19px}
.l1>li{background:linear-gradient(#d4d4d6,#d4d4d6) 25px 0/1px 100% no-repeat}
.l1>li:last-child{background-size:1px 11px}
.l2{margin-left:51px;border-left:1px dashed #b5b5b8}
.l2 li{display:flex;align-items:center;height:22px}
.l2 li .d{width:18px}
.on{background:#dedee0;font-weight:700;padding:0 3px;margin:0 -3px}
rv-hscroll{flex:none;padding-right:18px}`,
`<header>Project Browser - rac_basic_sampl...${ic('x',13)}</header>
<div class="m"><div class="tree"><div class="row root"><span class="e"></span><span class="d" style="width:8px;margin-right:3px"></span>${ic('views')}<span style="padding-left:5px">Views (all)</span></div>
<ul class="l1">${tree.map(([h,...k])=>`<li><div class="row"><span class="e"></span><span class="d" style="width:11px;margin-right:4px"></span>${h}</div><ul class="l2">${k.map(t=>`<li><span class="d"></span><span style="width:3px"></span><span class="${t==='Level 1'?'on':''}">${t}</span></li>`).join('')}</ul></li>`).join('')}</ul></div>
<rv-vscroll style="width:18px" before="0" size="468" after="226"></rv-vscroll></div><rv-hscroll before="0" size="164" after="33"></rv-hscroll>`);

/* ---------- status bar ---------- */
define('rv-status', `
:host{display:flex;height:29px;background:#cacacc;align-items:center;color:#2a2a2c;padding:4px 0 0 2px}
.t{width:693px}
rv-combo{height:21px;background:#fff;color:#7d7d80}
.a{width:254px;margin:0 8px}.b{width:256px;margin-left:8px}
.n{padding:0 18px 0 6px}
.r{margin-left:auto;display:flex;gap:8px;align-items:center}
.z{width:77px;color:#66666a;margin-left:-8px}`,
`<span class="t">Click to place the eye position at the cursor location.</span>${ic('s1')}<rv-combo class="a" label="Workset"></rv-combo>${ic('s2')}<span class="n">:0</span>${ic('s3')}<span style="width:8px"></span>${ic('s4')}<rv-combo class="b" label="Design option" value="Main Model"></rv-combo>
<div class="r">${['t1','t2','t3','t4','t5','t6','t7'].map(n=>ic(n)).join('')}<span class="z">:0</span></div>`);

/* ---------- shell ---------- */
define('rv-app', `
:host{display:flex;flex-direction:column;height:100vh;overflow:hidden;background:#d6d6d8;position:relative}
main{flex:1;display:flex;gap:4px;min-height:0}
.c{flex:1;display:flex;flex-direction:column;min-width:0}
.v{flex:1;display:flex;min-height:0}
.v rv-vscroll{--mr:2px}
.bub{position:absolute;right:29px;bottom:-2px;width:50px;height:50px;border-radius:50%;background:#7884c4;display:flex;align-items:center;justify-content:center}`,
`<rv-titlebar></rv-titlebar><rv-ribbon-tabs></rv-ribbon-tabs><rv-ribbon></rv-ribbon><rv-options></rv-options>
<main><rv-properties></rv-properties><div class="c"><rv-doctabs></rv-doctabs><div class="v"><rv-floor-plan></rv-floor-plan><rv-vscroll before="336" size="22" after="336"></rv-vscroll></div><rv-viewbar></rv-viewbar></div><rv-browser></rv-browser></main><rv-status></rv-status>
<button class="bub" aria-label="Captions"><svg width="32" height="18" viewBox="0 0 32 18" fill="none" stroke="#fff" stroke-width="2"><rect x="1" y="1" width="30" height="15" rx="3"/><path d="M6 9h8M18 9h8"/></svg></button>`);
</script>
</body>
</html>
